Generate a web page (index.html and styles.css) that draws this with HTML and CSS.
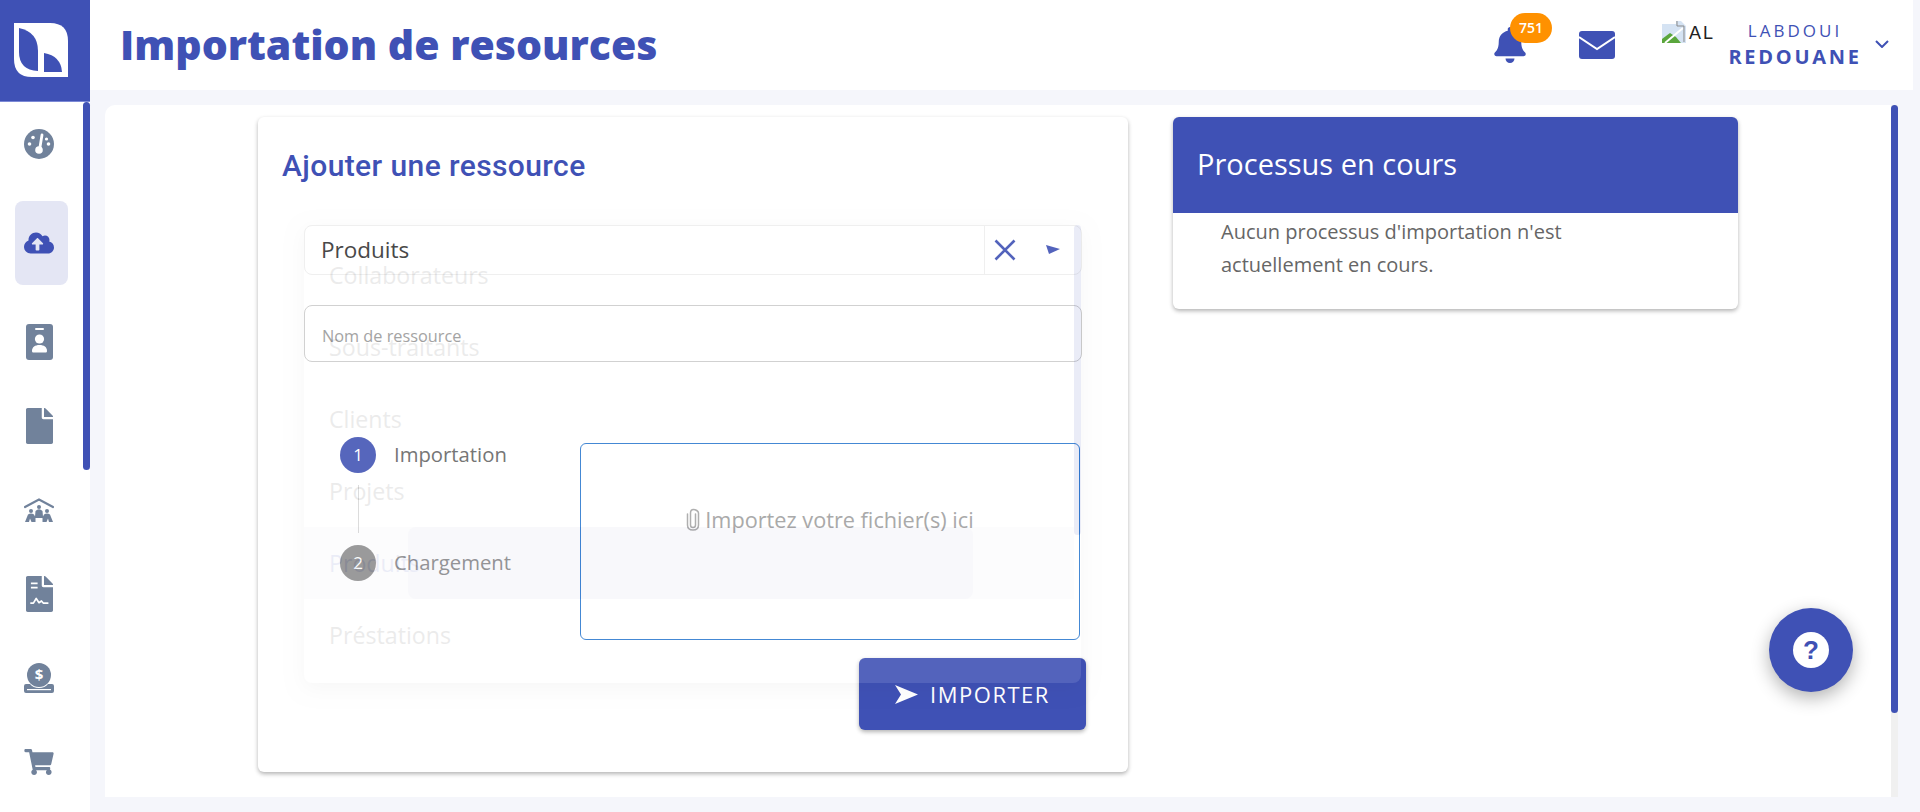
FILE: index.html
```html
<!DOCTYPE html>
<html lang="fr">
<head>
    <meta charset="UTF-8">
    <title>Importation de resources</title>
    <link rel="stylesheet" href="styles.css">
</head>
<body>
    <div class="app">
        <aside class="sidebar">
            <div class="logo">
                <svg width="54" height="54" viewBox="0 0 54 54">
                    <path fill="#fff" d="M0 0H36Q54 0 54 18V54H18Q0 54 0 36Z"/>
                    <path fill="#3f51b5" d="M5 5Q24 9 24 28V48Q5 47 5 29Z"/>
                    <path fill="#3f51b5" d="M30 30Q47 33 48 49H30Z"/>
                </svg>
            </div>
            <div class="side-body">
                <nav class="nav">
                    <a class="nav-item">
                        <svg width="30" height="30" viewBox="0 0 30 30">
                            <circle cx="15" cy="15" r="15" fill="#71829b"/>
                            <path d="M15.500 21L18 6" stroke="#fff" stroke-width="2.800" stroke-linecap="round"/>
                            <circle cx="15" cy="21" r="3.800" fill="#fff"/>
                            <circle cx="5.500" cy="15" r="1.800" fill="#fff"/>
                            <circle cx="9" cy="8.500" r="1.800" fill="#fff"/>
                            <circle cx="24.500" cy="15" r="1.800" fill="#fff"/>
                            <circle cx="22.500" cy="10" r="1.600" fill="#fff"/>
                        </svg>
                    </a>
                    <a class="nav-item active">
                        <svg width="30" height="24" viewBox="0 0 640 512"><path fill="#3f51b5" d="M537.6 226.6c4.1-10.7 6.4-22.4 6.4-34.6 0-53-43-96-96-96-19.7 0-38.1 6-53.3 16.2C367 64.2 315.3 32 256 32c-88.4 0-160 71.6-160 160 0 2.7.1 5.4.2 8.1C40.2 219.8 0 273.2 0 336c0 79.5 64.5 144 144 144h368c70.7 0 128-57.3 128-128 0-61.9-44-113.6-102.4-125.4zM393.4 288H328v112c0 8.8-7.2 16-16 16h-48c-8.8 0-16-7.2-16-16V288h-65.4c-14.3 0-21.4-17.2-11.3-27.3l105.4-105.4c6.2-6.2 16.4-6.2 22.6 0l105.4 105.4c10.1 10.1 2.9 27.3-11.3 27.3z"/></svg>
                    </a>
                    <a class="nav-item">
                        <svg width="27" height="36" viewBox="0 0 27 36">
                            <rect width="27" height="36" rx="3" fill="#71829b"/>
                            <rect x="9" y="4" width="9" height="2" rx="1" fill="#fff"/>
                            <circle cx="13.500" cy="15" r="4.600" fill="#fff"/>
                            <path fill="#fff" d="M6 27c0-4 3-6 7.500-6s7.500 2 7.500 6c0 1-.7 1.500-1.500 1.500h-12C6.700 28.500 6 28 6 27z"/>
                        </svg>
                    </a>
                    <a class="nav-item">
                        <svg width="27" height="36" viewBox="0 0 384 512"><path fill="#71829b" d="M224 136V0H24C10.700 0 0 10.700 0 24v464c0 13.300 10.700 24 24 24h336c13.300 0 24-10.700 24-24V160H248c-13.200 0-24-10.800-24-24zm160-14.100v6.100H256V0h6.100c6.400 0 12.500 2.500 17 7l97.900 98c4.500 4.500 7 10.600 7 16.900z"/></svg>
                    </a>
                    <a class="nav-item">
                        <svg width="30" height="24" viewBox="0 0 30 24">
                            <path d="M1 9L15 1.500L29 9" fill="none" stroke="#71829b" stroke-width="2.200" stroke-linecap="round"/>
                            <circle cx="15" cy="9" r="2" fill="#71829b"/>
                            <circle cx="7" cy="13" r="2" fill="#71829b"/>
                            <circle cx="23" cy="13" r="2" fill="#71829b"/>
                            <path fill="#71829b" d="M1 24L4 16.500Q7 14.500 10 16.500L11 18.500L11.500 13Q15 9.500 18.500 13L19 18.500L20 16.500Q23 14.500 26 16.500L29 24H25L24 20.500L22.500 24H18.500V20H11.500V24H7.500L6 20.500L5 24Z"/>
                        </svg>
                    </a>
                    <a class="nav-item">
                        <svg width="27" height="36" viewBox="0 0 384 512">
                            <path fill="#71829b" d="M224 136V0H24C10.700 0 0 10.700 0 24v464c0 13.300 10.700 24 24 24h336c13.300 0 24-10.700 24-24V160H248c-13.200 0-24-10.800-24-24zm160-14.100v6.100H256V0h6.100c6.400 0 12.500 2.500 17 7l97.900 98c4.500 4.500 7 10.600 7 16.900z"/>
                            <path d="M70 105H165M70 165H165" stroke="#fff" stroke-width="24"/>
                            <path d="M70 385H105L145 320L185 380L220 355L245 385H310" fill="none" stroke="#fff" stroke-width="24" stroke-linecap="round" stroke-linejoin="round"/>
                        </svg>
                    </a>
                    <a class="nav-item">
                        <svg width="30" height="30" viewBox="0 0 30 30">
                            <circle cx="15" cy="12" r="12" fill="#71829b"/>
                            <text x="15" y="17" class="coin-sign">$</text>
                            <path fill="#71829b" d="M2 21H6Q9 25 15 25T24 21H28Q30 21 30 23V28Q30 30 28 30H2Q0 30 0 28V23Q0 21 2 21Z"/>
                            <rect x="3" y="26" width="24" height="1.200" fill="#fff"/>
                        </svg>
                    </a>
                    <a class="nav-item">
                        <svg width="30" height="26" viewBox="0 0 576 512"><path fill="#71829b" d="M528.120 301.319l47.273-208C578.806 78.301 567.391 64 551.990 64H159.208l-9.166-44.810C147.758 8.021 137.930 0 126.529 0H24C10.745 0 0 10.745 0 24v16c0 13.255 10.745 24 24 24h69.883l70.248 343.435C147.325 417.100 136 435.222 136 456c0 30.928 25.072 56 56 56s56-25.072 56-56c0-15.674-6.447-29.835-16.824-40h209.647C430.447 426.165 424 440.326 424 456c0 30.928 25.072 56 56 56s56-25.072 56-56c0-22.172-12.888-41.332-31.579-50.405l5.517-24.276c3.413-15.018-8.002-29.319-23.403-29.319H218.117l-6.545-32h293.145c11.206 0 20.920-7.754 23.403-18.681z"/></svg>
                    </a>
                </nav>
                <div class="side-scroll"></div>
            </div>
        </aside>

        <div class="content">
            <header class="topbar">
                <h1 class="page-title">Importation de resources</h1>
                <div class="top-actions">
                    <div class="bell">
                        <svg width="32" height="36" viewBox="0 0 448 512"><path fill="#3f51b5" d="M224 512c35.320 0 63.970-28.650 63.970-64H160.030c0 35.350 28.650 64 63.970 64zm215.390-149.710c-19.320-20.760-55.470-51.990-55.470-154.290 0-77.700-54.480-139.900-127.940-155.160V32c0-17.670-14.320-32-31.980-32s-31.980 14.330-31.980 32v20.840C118.560 68.100 64.080 130.300 64.080 208c0 102.300-36.150 133.530-55.470 154.290-6 6.450-8.660 14.160-8.610 21.710.11 16.400 12.980 32 32.100 32h383.800c19.120 0 32-15.600 32.100-32 .05-7.550-2.610-15.270-8.610-21.710z"/></svg>
                        <span class="badge">751</span>
                    </div>
                    <svg class="mail" width="36" height="28" viewBox="0 0 36 28">
                        <rect width="36" height="28" rx="3" fill="#3f51b5"/>
                        <path d="M0 6L18 18L36 6" fill="none" stroke="#fff" stroke-width="2"/>
                    </svg>
                    <div class="avatar">
                        <svg width="24" height="23" viewBox="0 0 24 23">
                            <path fill="#d5e3f3" d="M0 4H14V1H19L24 6V23H0Z"/>
                            <path fill="#5aa63c" d="M0 23V19L8 13L14 17L19 23Z"/>
                            <path d="M3 23L21 8" stroke="#fff" stroke-width="2"/>
                            <path d="M15 1V6H22V22" fill="none" stroke="#8a8a8a"/>
                        </svg>
                        <span class="avatar-alt">AL</span>
                    </div>
                    <div class="user">
                        <span class="user-first">LABDOUI</span>
                        <span class="user-last">REDOUANE</span>
                    </div>
                    <svg class="chevron" width="14" height="8" viewBox="0 0 14 8"><path d="M1 1L7 7L13 1" fill="none" stroke="#3f51b5" stroke-width="2"/></svg>
                </div>
            </header>

            <main class="panel">
                <div class="panel-body">
                    <section class="card card-add">
                        <h2 class="card-title">Ajouter une ressource</h2>
                        <form class="form">
                            <div class="select">
                                <span class="select-value">Produits</span>
                                <div class="select-tools">
                                    <svg width="22" height="22" viewBox="0 0 22 22"><path d="M1.500 1.500L20.500 20.500M20.500 1.500L1.500 20.500" stroke="#3f51b5" stroke-width="2.600"/></svg>
                                    <svg class="select-arrow" width="14" height="10" viewBox="0 0 14 10"><path fill="#3f51b5" d="M0 0L14 4L3 9Z"/></svg>
                                </div>
                            </div>
                            <div class="name-input">Nom de ressource</div>

                            <div class="import-row">
                                <div class="stepper">
                                    <div class="step">
                                        <span class="step-num">1</span>
                                        <span class="step-label">Importation</span>
                                    </div>
                                    <div class="step-line"></div>
                                    <div class="step pending">
                                        <span class="step-num">2</span>
                                        <span class="step-label">Chargement</span>
                                    </div>
                                </div>
                                <div class="dropzone">
                                    <svg width="14" height="23" viewBox="0 0 14 23"><path d="M9.500 6V17C9.500 18.500 8.500 19.500 7 19.500S4.500 18.500 4.500 17V5C4.500 3 5.500 1.500 7.500 1.500S12.500 3 12.500 5V17C12.500 20 10.500 22 7 22S1.500 20 1.500 17V6" fill="none" stroke="#a6a6a6" stroke-width="1.500" stroke-linecap="round"/></svg>
                                    <span>Importez votre fichier(s) ici</span>
                                </div>
                            </div>

                            <div class="form-actions">
                                <button type="button" class="import-btn">
                                    <svg width="23" height="19" viewBox="0 0 23 19"><path fill="#fff" d="M0 0L23 9.500L0 19L6 9.500Z"/></svg>
                                    IMPORTER
                                </button>
                            </div>

                            <!-- select menu caught mid fade-in -->
                            <div class="menu">
                                <div class="menu-item">Collaborateurs</div>
                                <div class="menu-item">Sous-traitants</div>
                                <div class="menu-item">Clients</div>
                                <div class="menu-item">Projets</div>
                                <div class="menu-item selected"><span class="ripple"></span><span class="menu-text">Produits</span></div>
                                <div class="menu-item">Préstations</div>
                                <div class="menu-scroll"></div>
                            </div>
                        </form>
                    </section>

                    <section class="card card-process">
                        <h2 class="process-head">Processus en cours</h2>
                        <p class="process-text">Aucun processus d'importation n'est actuellement en cours.</p>
                    </section>

                    <button type="button" class="help-btn"><span class="help-mark">?</span></button>
                </div>
                <div class="panel-scroll"><div class="panel-thumb"></div></div>
            </main>
        </div>
    </div>
</body>
</html>
```

FILE: styles.css
```css
* {
    box-sizing: border-box;
}
body {
    margin: 0;
    height: 812px;
    overflow: hidden;
    font-family: "Open Sans", "Lato", sans-serif;
    background-color: #f5f6fb;
    color: #333;
}
.app {
    display: flex;
    height: 812px;
}

/* sidebar */
.sidebar {
    width: 90px;
    flex-shrink: 0;
    background-color: white;
}
.logo {
    height: 102px;
    padding: 23px 0 0 14px;
    background-color: #3f51b5;
    border-bottom: 1px solid #7c89d6;
}
.side-body {
    display: flex;
}
.nav {
    width: 83px;
    padding-left: 15px;
}
.nav-item {
    display: flex;
    align-items: center;
    justify-content: center;
    width: 53px;
    height: 84px;
    padding-right: 5px;
}
.nav-item.active {
    margin: 15px 0;
    background-color: #e4e6f4;
    border-radius: 8px;
}
.coin-sign {
    font-size: 15px;
    font-weight: 700;
    fill: white;
    text-anchor: middle;
}
.side-scroll {
    width: 7px;
    height: 368px;
    background-color: #3f51b5;
    border-radius: 4px;
}

/* top bar */
.content {
    width: 1823px;
}
.topbar {
    display: flex;
    align-items: center;
    justify-content: space-between;
    height: 90px;
    padding-left: 30px;
    background-color: white;
}
.page-title {
    margin: 0 0 3px;
    font-size: 41px;
    font-weight: 800;
    color: #3f51b5;
}
.top-actions {
    display: flex;
    align-items: center;
    height: 90px;
    width: 420px;
    padding-left: 1px;
    position: relative;
}
.bell {
    position: relative;
    width: 32px;
    height: 36px;
}
.badge {
    position: absolute;
    left: 16px;
    top: -14px;
    width: 42px;
    height: 30px;
    border-radius: 15px;
    background-color: #ff9100;
    color: white;
    font-size: 14px;
    font-weight: 600;
    line-height: 30px;
    text-align: center;
}
.mail {
    margin-left: 53px;
}
.avatar {
    display: flex;
    align-self: flex-start;
    width: 53px;
    height: 24px;
    margin: 20px 0 0 47px;
    overflow: hidden;
}
.avatar-alt {
    margin-left: 3px;
    font-family: "Liberation Sans", sans-serif;
    font-size: 18px;
    letter-spacing: 2px;
    line-height: 26px;
    color: #222;
}
.user {
    display: flex;
    flex-direction: column;
    align-items: center;
    width: 132px;
    margin: 0 0 3px 14px;
    color: #3f51b5;
}
.user-first {
    font-size: 17px;
    font-weight: 400;
    letter-spacing: 3px;
    line-height: 26px;
}
.user-last {
    font-size: 20px;
    font-weight: 700;
    letter-spacing: 2.700px;
    line-height: 26px;
}
.chevron {
    margin-left: 14px;
    margin-bottom: 2px;
}

/* main panel */
.panel {
    display: flex;
    width: 1793px;
    height: 692px;
    margin: 15px 0 0 15px;
}
.panel-body {
    position: relative;
    display: flex;
    align-items: flex-start;
    gap: 45px;
    flex: 1;
    padding: 12px 0 0 153px;
    background-color: white;
    border-radius: 10px 0 0 0;
}
.panel-scroll {
    width: 7px;
    background-color: #f0f0f0;
}
.panel-thumb {
    height: 608px;
    background-color: #3f51b5;
    border-radius: 4px;
}
.card {
    flex-shrink: 0;
    background-color: white;
    border-radius: 6px;
    box-shadow: 0 2px 4px rgba(0, 0, 0, 0.3);
}
.card-add {
    width: 870px;
    height: 655px;
    padding: 24px 0 0 24px;
}
.card-title {
    margin: 0 0 35px;
    font-family: "Roboto", sans-serif;
    font-size: 30px;
    font-weight: 500;
    letter-spacing: 0.4px;
    line-height: 49px;
    color: #3f51b5;
}
.form {
    position: relative;
    width: 778px;
    margin-left: 22px;
}
.select {
    display: flex;
    align-items: center;
    justify-content: space-between;
    height: 50px;
    padding-left: 16px;
    border: 1px solid #eee;
    border-radius: 8px;
}
.select-value {
    margin-bottom: 2px;
    font-size: 22.500px;
    color: #333;
}
.select-tools {
    display: flex;
    align-items: center;
    width: 97px;
    height: 48px;
    padding-left: 9px;
    border-left: 1px solid #eee;
}
.select-arrow {
    margin-left: 30px;
}
.name-input {
    height: 57px;
    margin-top: 30px;
    padding: 19px 0 0 17px;
    border: 1px solid #ccc;
    border-radius: 8px;
    font-size: 16.300px;
    color: #999;
}
.import-row {
    display: flex;
    margin-top: 81px;
}
.stepper {
    width: 276px;
    margin-top: -6px;
    padding-left: 36px;
}
.step {
    display: flex;
    align-items: center;
    gap: 18px;
}
.step-num {
    width: 36px;
    height: 36px;
    border-radius: 50%;
    background-color: #4354b5;
    color: white;
    font-size: 17px;
    line-height: 36px;
    text-align: center;
}
.step-label {
    margin-bottom: 2px;
    font-size: 20.300px;
    color: #666;
}
.step.pending .step-num {
    background-color: #929292;
}
.step.pending .step-label {
    color: #8e8e8e;
}
.step-line {
    width: 1px;
    height: 48px;
    margin: 12px 0 12px 18px;
    background-color: #d8d8d8;
}
.dropzone {
    display: flex;
    align-items: center;
    justify-content: center;
    gap: 5px;
    width: 500px;
    height: 197px;
    padding-bottom: 44px;
    border: 1px solid #2f7bd0;
    border-radius: 6px;
    font-size: 21.700px;
    color: #a0a0a0;
}
.form-actions {
    display: flex;
    justify-content: flex-end;
    margin: 18px -4px 0 0;
}
.import-btn {
    display: flex;
    align-items: center;
    justify-content: center;
    gap: 12px;
    width: 227px;
    height: 72px;
    border: none;
    border-radius: 6px;
    background-color: #3f51b5;
    box-shadow: 0 2px 4px rgba(0, 0, 0, 0.3);
    color: white;
    font-family: "Open Sans", sans-serif;
    font-size: 22px;
    letter-spacing: 1.500px;
}
.menu {
    position: absolute;
    left: 0;
    top: 0;
    width: 777px;
    height: 458px;
    padding: 14px 7px 0 0;
    background-color: white;
    border-radius: 8px;
    box-shadow: 0 5px 20px rgba(0, 0, 0, 0.3);
    opacity: 0.1;
}
.menu-item {
    position: relative;
    height: 72px;
    padding-left: 25px;
    font-size: 23.200px;
    line-height: 72px;
    color: #444;
}
.menu-item.selected {
    background-color: #e6e6f0;
    color: #3f51b5;
}
.ripple {
    position: absolute;
    left: 104px;
    top: 0;
    width: 565px;
    height: 72px;
    background-color: #c0c0dc;
    border-radius: 8px;
}
.menu-text {
    position: relative;
}
.menu-scroll {
    position: absolute;
    right: 0;
    top: 0;
    width: 7px;
    height: 310px;
    background-color: #3f51b5;
    border-radius: 4px;
}

/* right card */
.card-process {
    width: 565px;
    height: 192px;
    overflow: hidden;
}
.process-head {
    height: 96px;
    margin: 0;
    padding-left: 24px;
    background-color: #3f51b5;
    color: white;
    font-size: 29px;
    font-weight: 400;
    line-height: 94px;
}
.process-text {
    width: 400px;
    margin: 0 0 0 48px;
    padding-top: 2px;
    font-size: 20px;
    line-height: 33px;
    color: #666;
}
.help-btn {
    position: absolute;
    left: 1664px;
    top: 503px;
    width: 84px;
    height: 84px;
    padding: 0;
    border: none;
    border-radius: 50%;
    background-color: #3f51b5;
    box-shadow: 0 6px 18px rgba(0, 0, 0, 0.3);
}
.help-mark {
    display: block;
    width: 36px;
    height: 36px;
    margin: 0 auto;
    border-radius: 50%;
    background-color: white;
    color: #3f51b5;
    font-size: 26px;
    font-weight: 800;
    line-height: 36px;
}
```
